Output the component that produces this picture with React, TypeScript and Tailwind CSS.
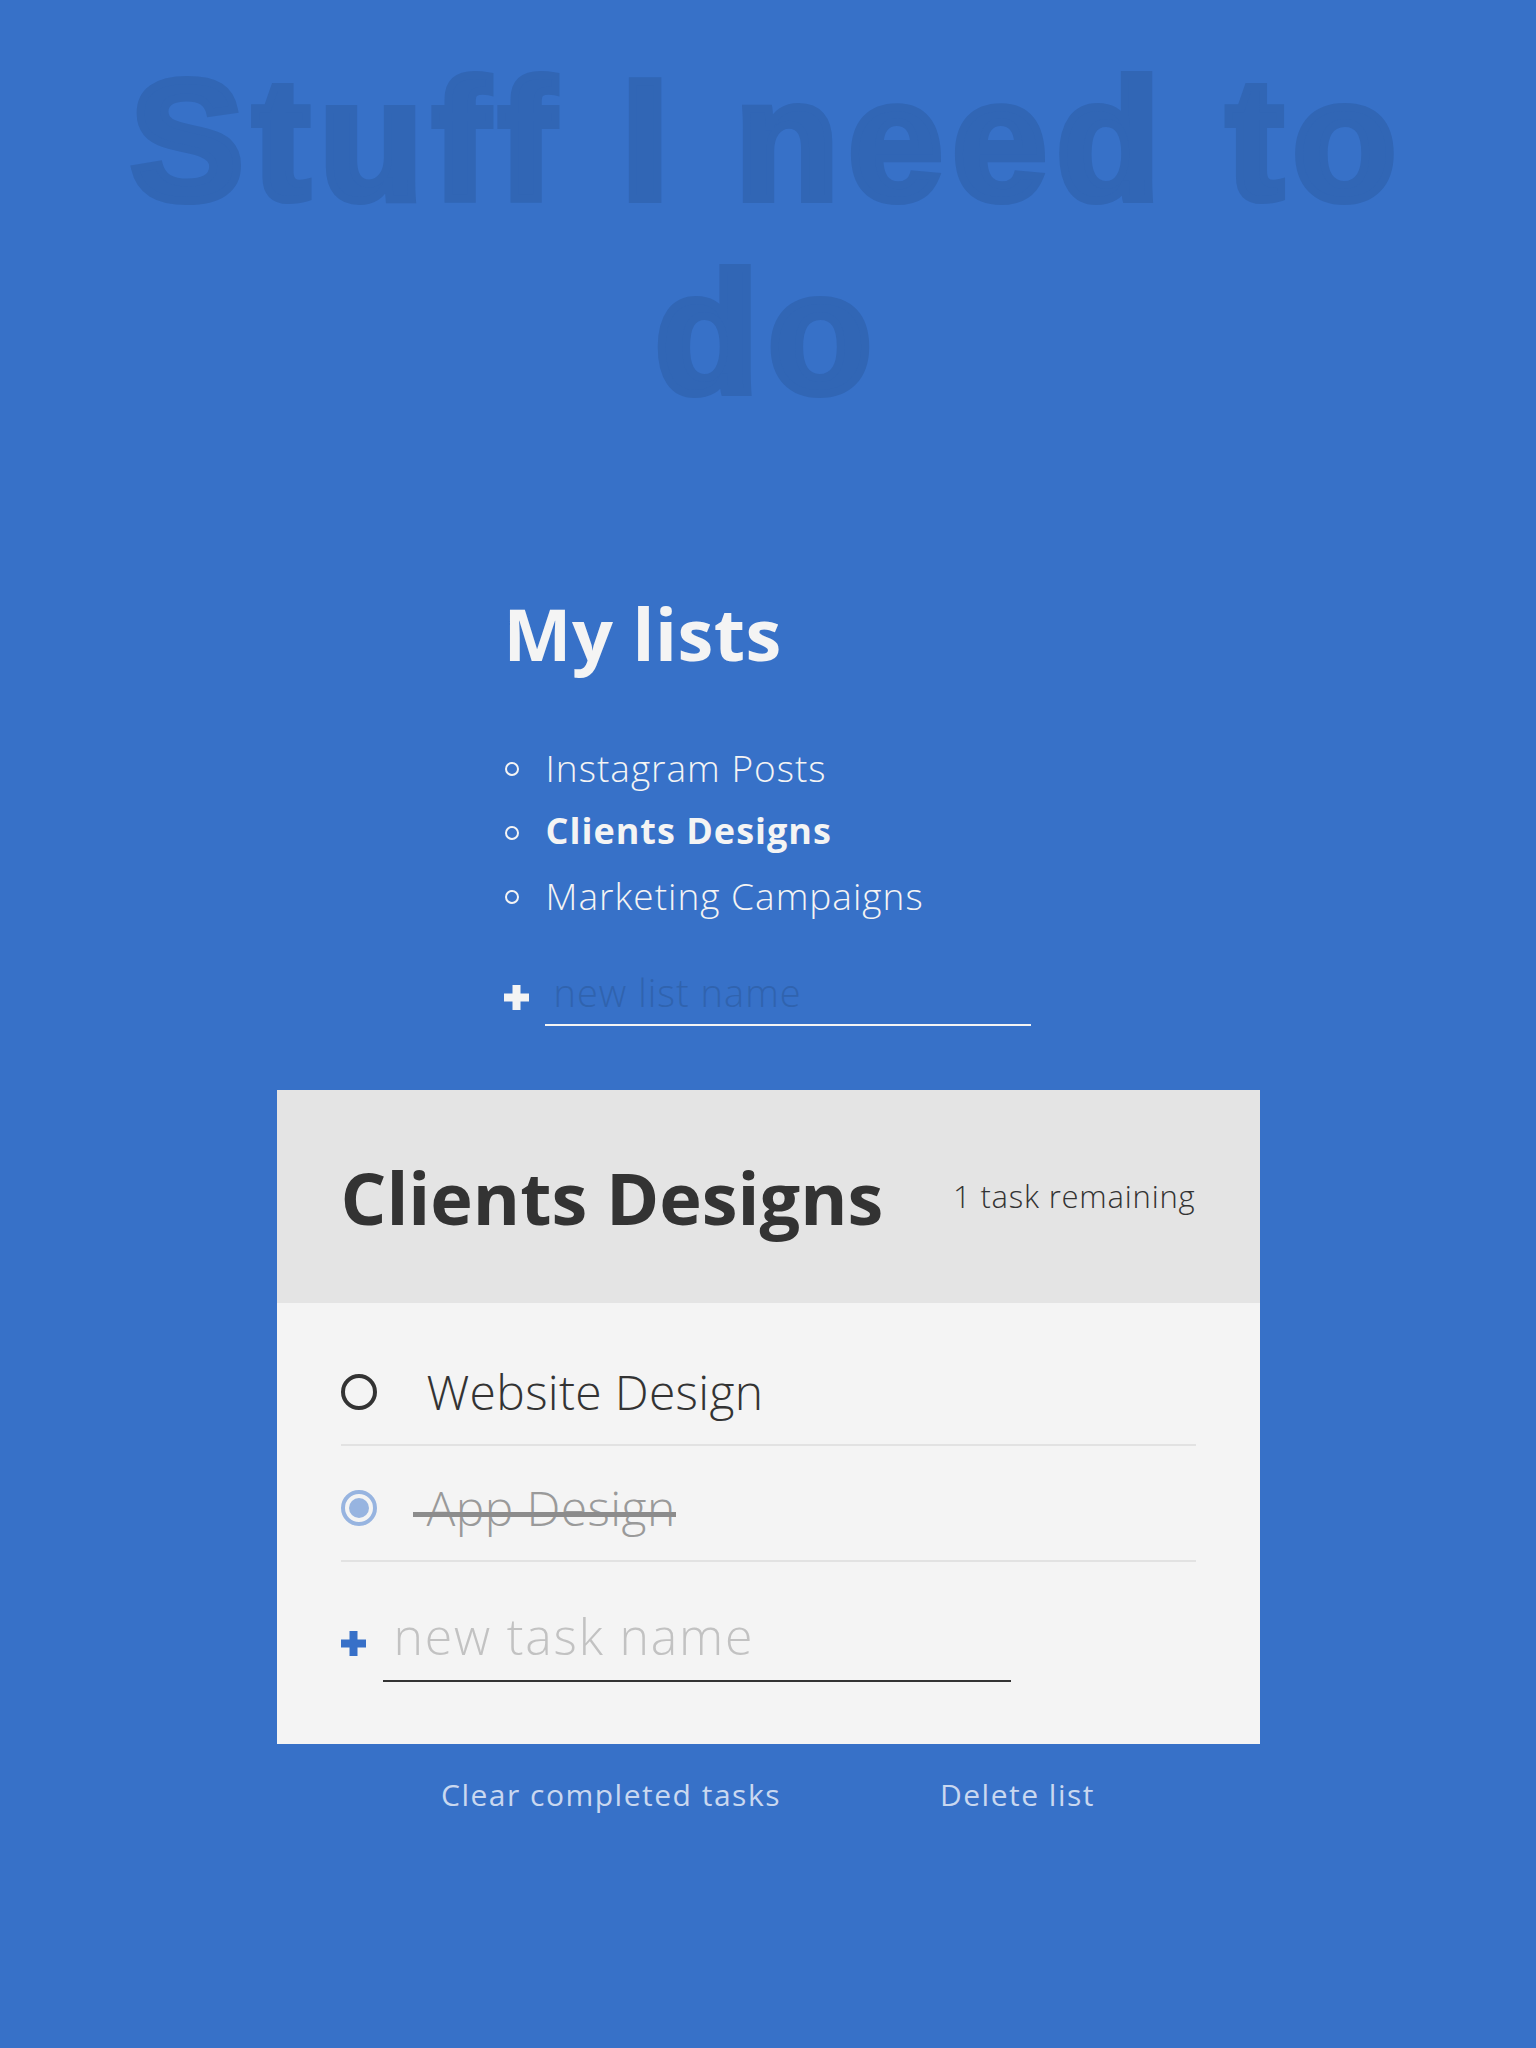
const lists = [
  { name: "Instagram Posts", active: false },
  { name: "Clients Designs", active: true },
  { name: "Marketing Campaigns", active: false },
];

const Plus = ({ size, thick, color }: { size: number; thick: number; color: string }) => (
  <svg width={size} height={size} viewBox={`0 0 ${size} ${size}`} className="shrink-0">
    <rect x={(size - thick) / 2} y={0} width={thick} height={size} fill={color} />
    <rect x={0} y={(size - thick) / 2} width={size} height={thick} fill={color} />
  </svg>
);

const App = () => {
  return (
    <div className="min-h-[2048px] bg-[#3771c8] font-['Open_Sans',sans-serif] pt-[44px] pb-[200px]">
      <h1 className="text-center font-['Liberation_Sans',Arial,sans-serif] font-bold text-[170px] leading-[193px] tracking-[9.5px] text-[#3166b5] [-webkit-text-stroke:8px_#3166b5] px-[40px]">
        Stuff I need to do
      </h1>

      <div className="mx-auto w-[983px]">
        {/* my lists */}
        <div className="pl-[227px] mt-[167px]">
          <h2 className="text-[72px] leading-none font-bold text-[#f4f4f4] tracking-[0.5px]">My lists</h2>
          <ul className="mt-[66px]">
            {lists.map((l) => (
              <li key={l.name} className="flex items-center h-[64px] text-[#f4f4f4]">
                <span className="w-[14px] h-[14px] rounded-full border-2 border-[#f4f4f4] mt-[4px] ml-[1px] shrink-0" />
                <span
                  className={`ml-[27px] leading-none tracking-[1px] ${
                    l.active ? "font-bold text-[36px]" : "font-light text-[37px]"
                  }`}
                >
                  {l.name}
                </span>
              </li>
            ))}
          </ul>
          <div className="flex items-center mt-[41px]">
            <Plus size={25} thick={8} color="#f4f4f4" />
            <div className="ml-[16px] w-[486px] border-b-2 border-[#f4f4f4] pb-[8px]">
              <input
                placeholder="new list name"
                className="w-full h-[48px] bg-transparent outline-none pl-[9px] text-[38px] tracking-[1px] font-light text-[#f4f4f4] placeholder:text-[#3063ae]"
              />
            </div>
          </div>
        </div>

        {/* active list panel */}
        <div className="mt-[64px] bg-[#f4f4f4]">
          <div className="h-[213px] bg-[#e4e4e4] px-[64px] flex items-center justify-between">
            <h2 className="text-[72px] leading-none font-bold text-[#333333]">Clients Designs</h2>
            <p className="text-[31px] leading-none font-light text-[#333333] tracking-[0.8px]">1 task remaining</p>
          </div>
          <div className="px-[64px] pt-[27px] pb-[62px]">
            <div className="h-[116px] pt-[10px] border-b-2 border-[#e2e2e2] flex items-center">
              <span className="w-[36px] h-[36px] rounded-full border-4 border-[#333333] shrink-0" />
              <span className="ml-[50px] text-[48px] leading-none font-light text-[#333333] tracking-[0.3px]">
                Website Design
              </span>
            </div>
            <div className="h-[116px] pt-[10px] border-b-2 border-[#e2e2e2] flex items-center">
              <span className="w-[36px] h-[36px] rounded-full border-4 border-[#97b4e0] p-[4px] shrink-0">
                <span className="block w-full h-full rounded-full bg-[#97b4e0]" />
              </span>
              <span className="relative ml-[50px] text-[48px] leading-none font-light text-[#9a9a9a] tracking-[0.4px]">
                App Design
                <span className="absolute left-[-14px] right-0 top-[58%] h-[5px] bg-[#8c8c8c]" />
              </span>
            </div>
            <div className="flex items-center mt-[42px]">
              <Plus size={25} thick={8} color="#3770c8" />
              <div className="ml-[17px] w-[628px] border-b-2 border-[#333333] pb-[12px]">
                <input
                  placeholder="new task name"
                  className="w-full h-[64px] bg-transparent outline-none pl-[11px] text-[50px] tracking-[1.8px] font-light text-[#333333] placeholder:text-[#c2c2c2]"
                />
              </div>
            </div>
          </div>
        </div>

        {/* footer actions */}
        <div className="mt-[36px] flex justify-center gap-[159px] text-[30px] leading-none text-[#c9d8f0] tracking-[1.5px]">
          <button className="cursor-pointer">Clear completed tasks</button>
          <button className="cursor-pointer">Delete list</button>
        </div>
      </div>
    </div>
  );
};

export default App;
